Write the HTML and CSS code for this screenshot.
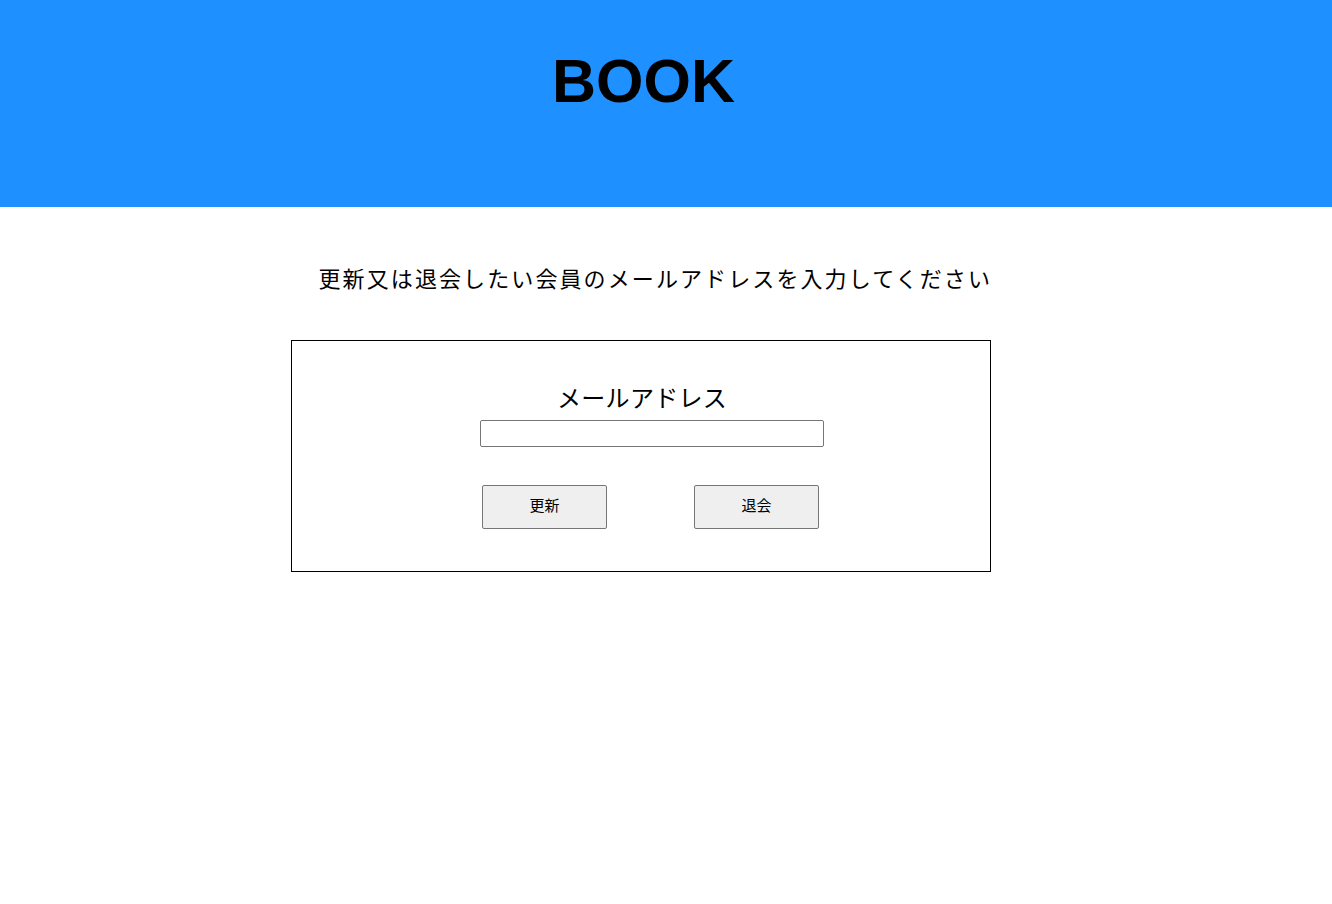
FILE: index.html
```html
<!DOCTYPE html>
<html lang="ja">
<head>
<meta charset="utf-8">
<title>BOOK</title>
<link rel="stylesheet" href="styles.css">
</head>
<body>
<header class="site-header">
  <h1 class="site-title">BOOK</h1>
</header>
<main class="content">
  <p class="lead">更新又は退会したい会員のメールアドレスを入力してください</p>
  <form class="panel">
    <div class="field">
      <label class="field-label" for="email">メールアドレス</label>
      <input class="field-input" id="email" type="text">
      <div class="actions">
        <button class="btn" type="button">更新</button>
        <button class="btn" type="button">退会</button>
      </div>
    </div>
  </form>
</main>
</body>
</html>
```

FILE: styles.css
```css
html, body {
  margin: 0;
  padding: 0;
  background: #ffffff;
  color: #000000;
  font-family: "Noto Sans CJK JP", "Noto Sans", sans-serif;
}

.site-header {
  background: #1e90ff;
  height: 207px;
  box-sizing: border-box;
  padding-top: 46px;
}

.site-title {
  margin: 0 45px 0 0;
  text-align: center;
  font-family: "Liberation Sans", Arial, sans-serif;
  font-weight: bold;
  font-size: 61px;
  line-height: 70px;
}

.content {
  width: 700px;
  margin-left: 291px;
  display: flex;
  flex-direction: column;
}

.lead {
  margin: 55px -1px 47px 0;
  font-size: 22px;
  line-height: 31px;
  letter-spacing: 2.1px;
  text-align: right;
  white-space: nowrap;
}

.panel {
  border: 1px solid #000000;
  padding: 40px 0 42px 0;
  display: flex;
  flex-direction: column;
  align-items: stretch;
}

.field {
  display: flex;
  flex-direction: column;
  align-items: flex-start;
  padding-left: 188px;
}

.field-label {
  font-size: 24px;
  line-height: 32px;
  margin-left: 77px;
  letter-spacing: 0.3px;
}

.field-input {
  margin-top: 7px;
  width: 344px;
  height: 27px;
  box-sizing: border-box;
  border: 1px solid #767676;
  border-radius: 2px;
  padding: 1px 2px;
  background: #ffffff;
}

.actions {
  display: flex;
  gap: 87px;
  margin-top: 38px;
  padding-left: 2px;
}

.btn {
  width: 125px;
  height: 44px;
  box-sizing: border-box;
  background: #efefef;
  border: 1px solid #767676;
  border-radius: 2px;
  font-family: "Noto Sans CJK JP", sans-serif;
  font-size: 15px;
  line-height: 20px;
  color: #000000;
  padding: 0 0 4px 0;
}
```
